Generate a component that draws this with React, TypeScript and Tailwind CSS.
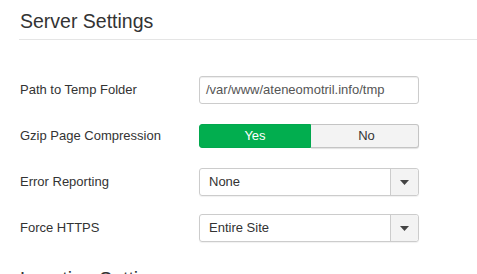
export default function App() {
  const rows = [
    { label: "Path to Temp Folder", kind: "input", value: "/var/www/ateneomotril.info/tmp" },
    { label: "Gzip Page Compression", kind: "toggle" },
    { label: "Error Reporting", kind: "select", value: "None" },
    { label: "Force HTTPS", kind: "select", value: "Entire Site" },
  ];

  return (
    <div className="h-[274px] overflow-hidden bg-white pl-[20px] pt-[9px] font-['Liberation_Sans',Arial,sans-serif] text-[#333]">
      <h2 className="-ml-px border-b border-[#e5e5e5] pb-[6px] pl-px text-[19.5px] leading-[24px] font-normal">
        Server Settings
      </h2>

      <div className="mt-[36px] flex flex-col gap-[18px]">
        {rows.map((row) => (
          <div key={row.label} className="flex h-[28px] items-center">
            <label className="w-[179px] text-[13px]">{row.label}</label>
            {row.kind === "input" && (
              <div className="flex h-[28px] w-[220px] items-center rounded-[3px] border border-[#ccc] px-[6px] text-[13px] text-[#555] shadow-[inset_0_1px_1px_rgba(0,0,0,0.075)]">
                {row.value}
              </div>
            )}
            {row.kind === "toggle" && (
              <div className="flex h-[24px] w-[220px] text-[13px]">
                <div className="flex w-[112px] items-center justify-center rounded-l-[3px] border border-[#02a84e] bg-[#02ae4f] text-white">
                  Yes
                </div>
                <div className="flex flex-1 items-center justify-center rounded-r-[3px] border border-l-0 border-[#c4c4c4] bg-[#f3f3f3] pl-[4px] text-[#333] shadow-[0_1px_1px_rgba(0,0,0,0.12)]">
                  No
                </div>
              </div>
            )}
            {row.kind === "select" && (
              <div className="flex h-[28px] w-[220px] rounded-[3px] border border-[#ccc] text-[13px] shadow-[0_1px_1px_rgba(0,0,0,0.06)]">
                <div className="flex flex-1 items-center pl-[9px] text-[#333]">{row.value}</div>
                <div className="flex w-[28px] items-center justify-center rounded-r-[3px] border-l border-[#ccc] bg-[#f3f3f3]">
                  <svg width="9" height="5" viewBox="0 0 9 5">
                    <path d="M0 0h9L4.5 5z" fill="#444" />
                  </svg>
                </div>
              </div>
            )}
          </div>
        ))}
      </div>

      <h2 className="mt-[25px] text-[19.5px] leading-[24px] font-normal">Location Settings</h2>
    </div>
  );
}
